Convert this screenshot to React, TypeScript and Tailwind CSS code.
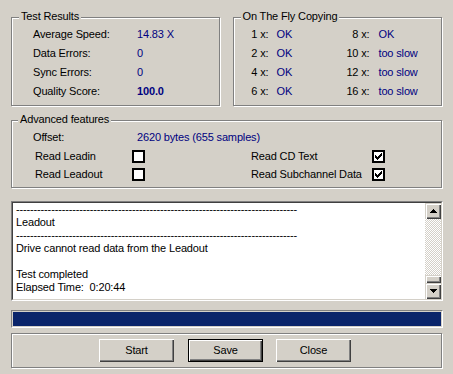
import React from 'react';

const DASHES = '-'.repeat(80);

const LOG_LINES = [
    DASHES,
    'Leadout',
    DASHES,
    'Drive cannot read data from the Leadout',
    '',
    'Test completed',
    'Elapsed Time:  0:20:44',
];

const FLY_ROWS = [
    { a: '1 x:', av: 'OK', b: '8 x:', bv: 'OK' },
    { a: '2 x:', av: 'OK', b: '10 x:', bv: 'too slow' },
    { a: '4 x:', av: 'OK', b: '12 x:', bv: 'too slow' },
    { a: '6 x:', av: 'OK', b: '16 x:', bv: 'too slow' },
];

function GroupBox({ title, className, titleClass, children }: { title?: string; className: string; titleClass?: string; children?: React.ReactNode }) {
    return (
        <div className={`relative border border-[#808080] shadow-[inset_1px_1px_0_#fff,1px_1px_0_#fff] ${className}`}>
            {title && (
                <div className={`absolute top-[-8px] px-[2px] bg-[#d4d0c8] leading-[13px] whitespace-nowrap ${titleClass ?? 'left-[7px]'}`}>
                    {title}
                </div>
            )}
            {children}
        </div>
    );
}

function CheckBox({ checked }: { checked: boolean }) {
    return (
        <div className="w-[13px] h-[13px] border-2 border-black bg-white flex items-center justify-center">
            {checked && (
                <svg width="7" height="7" viewBox="0 0 7 7" shapeRendering="crispEdges">
                    {[2, 3, 4, 3, 2, 1, 0].map((y, x) => (
                        <rect key={x} x={x} y={y} width="1" height="3" fill="#000" />
                    ))}
                </svg>
            )}
        </div>
    );
}

function ScrollButton({ down }: { down?: boolean }) {
    return (
        <div className="w-[16px] h-[16px] bg-[#d4d0c8] shadow-[inset_1px_1px_0_#d4d0c8,inset_2px_2px_0_#fff,inset_-1px_-1px_0_#404040,inset_-2px_-2px_0_#808080] flex items-center justify-center">
            <svg width="7" height="4" viewBox="0 0 7 4" shapeRendering="crispEdges">
                <path d={down ? 'M0 0h7l-3.5 4z' : 'M0 4h7l-3.5-4z'} fill="#000" />
            </svg>
        </div>
    );
}

function Button({ label, isDefault }: { label: string; isDefault?: boolean }) {
    const bevel = 'bg-[#d4d0c8] shadow-[inset_1px_1px_0_#fff,inset_-1px_-1px_0_#404040,inset_-2px_-2px_0_#808080] flex items-center justify-center';
    if (isDefault) {
        return (
            <div className="w-[75px] h-[23px] border border-black">
                <div className={`w-full h-full ${bevel}`}>{label}</div>
            </div>
        );
    }
    return <div className={`w-[75px] h-[23px] ${bevel}`}>{label}</div>;
}

export default function App() {
    return (
        <div className="w-[453px] h-[374px] bg-[#d4d0c8] pt-[17px] px-[11px] font-['Liberation_Sans',Arial,sans-serif] text-[11px] tracking-[-0.15px] text-black overflow-hidden">
            {/* top row */}
            <div className="flex gap-[13px]">
                <GroupBox title="Test Results" className="w-[209px] h-[89px]">
                    <div className="pt-[7px] pl-[21px] grid grid-cols-[104px_1fr] auto-rows-[19px] leading-[19px]">
                        <div>Average Speed:</div>
                        <div className="text-[#000080]">14.83 X</div>
                        <div>Data Errors:</div>
                        <div className="text-[#000080]">0</div>
                        <div>Sync Errors:</div>
                        <div className="text-[#000080]">0</div>
                        <div>Quality Score:</div>
                        <div className="text-[#000080] font-bold">100.0</div>
                    </div>
                </GroupBox>
                <GroupBox title="On The Fly Copying" className="w-[210px] h-[89px]">
                    <div className="pt-[7px] grid grid-cols-[35px_62px_39px_1fr] auto-rows-[19px] leading-[19px]">
                        {FLY_ROWS.map((r) => (
                            <React.Fragment key={r.a}>
                                <div className="text-right">{r.a}</div>
                                <div className="pl-[8px] text-[#000080]">{r.av}</div>
                                <div className="text-right">{r.b}</div>
                                <div className="pl-[9px] text-[#000080] whitespace-nowrap">{r.bv}</div>
                            </React.Fragment>
                        ))}
                    </div>
                </GroupBox>
            </div>

            {/* advanced */}
            <GroupBox title="Advanced features" titleClass="left-[6px]" className="mt-[14px] w-[431px] h-[68px]">
                <div className="pt-[7px]">
                    <div className="flex h-[19px] items-center pl-[21px]">
                        <div className="w-[104px]">Offset:</div>
                        <div className="text-[#000080]">2620 bytes (655 samples)</div>
                    </div>
                    <div className="flex h-[18px] items-center pl-[23px]">
                        <div className="w-[97px]">Read Leadin</div>
                        <CheckBox checked={false} />
                        <div className="w-[106px]" />
                        <div className="w-[121px]">Read CD Text</div>
                        <CheckBox checked />
                    </div>
                    <div className="flex h-[18px] items-center pl-[23px]">
                        <div className="w-[97px]">Read Leadout</div>
                        <CheckBox checked={false} />
                        <div className="w-[106px]" />
                        <div className="w-[121px] whitespace-nowrap">Read Subchannel Data</div>
                        <CheckBox checked />
                    </div>
                </div>
            </GroupBox>

            {/* log */}
            <div className="mt-[13px] w-[432px] h-[100px] border border-t-[#808080] border-l-[#808080] border-b-white border-r-white">
                <div className="w-full h-full border border-t-[#404040] border-l-[#404040] border-b-[#d4d0c8] border-r-[#d4d0c8] bg-white flex">
                    <div className="flex-1 pl-[3px] leading-[13px] overflow-hidden whitespace-pre">
                        {LOG_LINES.map((l, i) => (
                            <div key={i} className="h-[13px]">{l}</div>
                        ))}
                    </div>
                    <div className="w-[16px] flex flex-col">
                        <ScrollButton />
                        <div className="flex-1 bg-[repeating-conic-gradient(#d4d0c8_0_25%,#fff_0_50%)] bg-[length:2px_2px]" />
                        <div className="h-[8px] bg-[#d4d0c8] shadow-[inset_1px_1px_0_#d4d0c8,inset_2px_2px_0_#fff,inset_-1px_-1px_0_#404040,inset_-2px_-2px_0_#808080]" />
                        <ScrollButton down />
                    </div>
                </div>
            </div>

            {/* progress */}
            <div className="mt-[9px] w-[432px] h-[18px] border border-t-[#808080] border-l-[#808080] border-b-white border-r-white p-[1px]">
                <div className="w-full h-full bg-[#0a246a]" />
            </div>

            {/* buttons */}
            <GroupBox className="mt-[5px] w-[431px] h-[35px]">
                <div className="pt-[5px] pl-[87px] flex">
                    <Button label="Start" />
                    <div className="w-[14px]" />
                    <Button label="Save" isDefault />
                    <div className="w-[13px]" />
                    <Button label="Close" />
                </div>
            </GroupBox>
        </div>
    );
}
